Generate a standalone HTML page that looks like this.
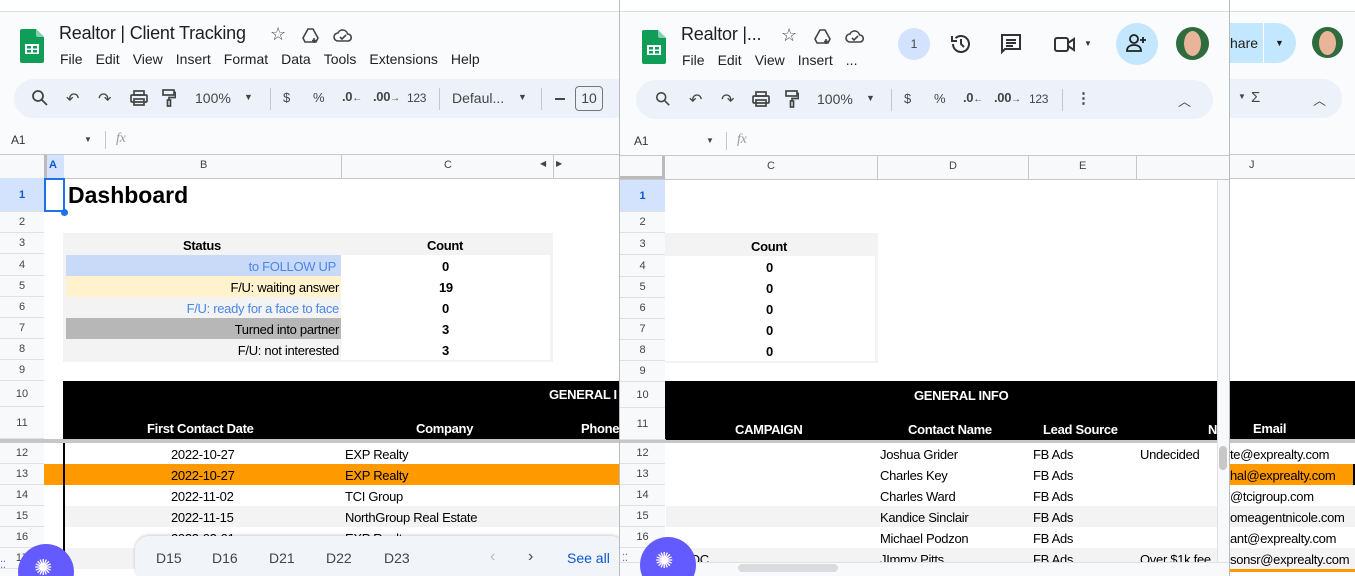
<!DOCTYPE html>
<html style="width:1355px;height:576px;overflow:hidden"><head><meta charset="utf-8">
<style>
*{margin:0;padding:0;box-sizing:border-box}
body{width:1355px;height:576px;overflow:hidden;position:relative;background:#fff;font-family:"Liberation Sans",Arial,sans-serif;color:#202124}
.a{position:absolute}
.t{position:absolute;white-space:nowrap;font-size:13px;letter-spacing:-0.3px}
.rh{position:absolute;left:0;width:44px;text-align:center;font-size:11px;color:#444;border-bottom:1px solid #e1e1e1;background:#f8f9fa}
.rh2{position:absolute;left:620px;width:45px;text-align:center;font-size:11px;color:#444;border-bottom:1px solid #e1e1e1;background:#f8f9fa}
.menu span{margin-right:13px}
.ic{position:absolute;font-size:15px;color:#444}
</style></head><body>

<!-- ===== LEFT WINDOW ===== -->
<div class="a" style="left:0;top:0;width:620px;height:155px;background:#f9fbfd"></div>
<div class="a" style="left:0;top:0;width:1355px;height:12px;background:#fff;border-bottom:1px solid #dadce0"></div>
<svg class="a" style="left:20px;top:29px" width="24" height="34" viewBox="0 0 24 34"><path d="M2 0h14l8 8v24a2 2 0 0 1-2 2H2a2 2 0 0 1-2-2V2a2 2 0 0 1 2-2z" fill="#0f9d58"/><path d="M16 0l8 8h-6a2 2 0 0 1-2-2z" fill="#87ceac"/><rect x="5" y="15" width="14" height="10" fill="#fff"/><rect x="7" y="17" width="4" height="2.5" fill="#0f9d58"/><rect x="13" y="17" width="4" height="2.5" fill="#0f9d58"/><rect x="7" y="21" width="4" height="2.5" fill="#0f9d58"/><rect x="13" y="21" width="4" height="2.5" fill="#0f9d58"/></svg>
<div class="t" style="left:59px;top:23px;font-size:18px;color:#1f1f1f;letter-spacing:-0.2px">Realtor | Client Tracking</div>
<div class="ic" style="left:270px;top:24px;font-size:18px">☆</div>
<svg class="a" style="left:302px;top:27px" width="18" height="17" viewBox="0 0 18 17" fill="none" stroke="#444" stroke-width="1.6"><path d="M6 2h5l5 9-2 4H3l-2-4z"/><path d="M12 11v5M10 13.5h5"/></svg>
<svg class="a" style="left:333px;top:28px" width="20" height="15" viewBox="0 0 20 15" fill="none" stroke="#444" stroke-width="1.6"><path d="M5 13a4 4 0 0 1 0-8 5 5 0 0 1 9.5 1A3.5 3.5 0 0 1 15 13z"/><path d="M7 9l2 2 4-4"/></svg>
<div class="t menu" style="left:60px;top:51px;font-size:14px;color:#1f1f1f;letter-spacing:0"><span>File</span><span>Edit</span><span>View</span><span>Insert</span><span>Format</span><span>Data</span><span>Tools</span><span>Extensions</span><span>Help</span></div>
<div class="a" style="left:14px;top:79px;width:620px;height:39px;background:#edf2fa;border-radius:20px"></div>
<svg class="a" style="left:31px;top:89px" width="18" height="18" viewBox="0 0 18 18" fill="none" stroke="#444" stroke-width="1.8"><circle cx="7" cy="7" r="5"/><path d="M11 11l5 5"/></svg>
<div class="t" style="left:66px;top:89px;font-size:16px;color:#444">↶</div>
<div class="t" style="left:98px;top:89px;font-size:16px;color:#444">↷</div>
<svg class="a" style="left:130px;top:90px" width="18" height="16" viewBox="0 0 18 16" fill="none" stroke="#444" stroke-width="1.7"><rect x="4" y="1" width="10" height="4"/><rect x="1" y="5" width="16" height="7" rx="1"/><rect x="4" y="9" width="10" height="6"/></svg>
<svg class="a" style="left:162px;top:89px" width="14" height="18" viewBox="0 0 14 18" fill="none" stroke="#444" stroke-width="1.7"><rect x="1" y="1" width="11" height="5"/><path d="M12 3.5h1.5v5H7v3"/><rect x="5.5" y="11" width="3" height="6"/></svg>
<div class="t" style="left:195px;top:90px;font-size:14px;color:#444;letter-spacing:0">100%</div>
<div class="t" style="left:244px;top:92px;font-size:9px;color:#444">▼</div>
<div class="a" style="left:270px;top:88px;width:1px;height:22px;background:#c7c7c7"></div>
<div class="t" style="left:283px;top:90px;font-size:13px;color:#444">$</div>
<div class="t" style="left:313px;top:90px;font-size:13px;color:#444">%</div>
<div class="t" style="left:342px;top:89px;font-size:13px;color:#444;font-weight:bold">.0<span style="font-size:10px">←</span></div>
<div class="t" style="left:373px;top:89px;font-size:13px;color:#444;font-weight:bold">.00<span style="font-size:10px">→</span></div>
<div class="t" style="left:407px;top:91px;font-size:12px;color:#444">123</div>
<div class="a" style="left:439px;top:88px;width:1px;height:22px;background:#c7c7c7"></div>
<div class="t" style="left:452px;top:90px;font-size:14px;color:#444;letter-spacing:0">Defaul...</div>
<div class="t" style="left:518px;top:92px;font-size:9px;color:#444">▼</div>
<div class="a" style="left:541px;top:88px;width:1px;height:22px;background:#c7c7c7"></div>
<div class="a" style="left:555px;top:98px;width:10px;height:1.5px;background:#444"></div>
<div class="a" style="left:575px;top:86px;width:28px;height:25px;border:1px solid #747775;border-radius:4px;font-size:14px;text-align:center;line-height:23px;color:#444">10</div>
<div class="t" style="left:11px;top:133px;font-size:12px;color:#333">A1</div>
<div class="t" style="left:84px;top:135px;font-size:8px;color:#444">▼</div>
<div class="a" style="left:105px;top:131px;width:1px;height:18px;background:#c7c7c7"></div>
<div class="t" style="left:116px;top:131px;font-size:14px;color:#999;font-style:italic;font-family:'Liberation Serif',serif">fx</div>
<div class="a" style="left:0;top:154px;width:620px;height:25px;background:#f8f9fa;border-top:1px solid #c7c7c7;border-bottom:1px solid #c7c7c7"></div>
<div class="a" style="left:44px;top:155px;width:20px;height:23px;background:#d3e3fd;border-left:3px solid #bbb"></div>
<div class="t" style="left:49px;top:159px;font-size:11px;font-weight:bold;color:#0b57d0">A</div>
<div class="a" style="left:341px;top:155px;width:1px;height:23px;background:#c7c7c7"></div>
<div class="a" style="left:553px;top:155px;width:1px;height:23px;background:#c7c7c7"></div>
<div class="t" style="left:200px;top:159px;font-size:11px;color:#444">B</div>
<div class="t" style="left:444px;top:159px;font-size:11px;color:#444">C</div>
<div class="t" style="left:540px;top:159px;font-size:8px;color:#444">◀</div>
<div class="t" style="left:556px;top:159px;font-size:8px;color:#444">▶</div>
<div class="a" style="left:0;top:178px;width:44px;height:398px;background:#f8f9fa;border-right:1px solid #c7c7c7"></div>
<div class="rh" style="top:178px;height:34px;line-height:34px;background:#d3e3fd;color:#0b57d0;font-weight:bold">1</div>
<div class="rh" style="top:212px;height:21px;line-height:21px">2</div>
<div class="rh" style="top:233px;height:21px;line-height:21px">3</div>
<div class="rh" style="top:254px;height:22px;line-height:22px">4</div>
<div class="rh" style="top:276px;height:21px;line-height:21px">5</div>
<div class="rh" style="top:297px;height:21px;line-height:21px">6</div>
<div class="rh" style="top:318px;height:21px;line-height:21px">7</div>
<div class="rh" style="top:339px;height:21px;line-height:21px">8</div>
<div class="rh" style="top:360px;height:21px;line-height:21px">9</div>
<div class="rh" style="top:381px;height:26px;line-height:26px">10</div>
<div class="rh" style="top:407px;height:32px;line-height:32px">11</div>
<div class="rh" style="top:443px;height:21px;line-height:21px">12</div>
<div class="rh" style="top:464px;height:21px;line-height:21px">13</div>
<div class="rh" style="top:485px;height:21px;line-height:21px">14</div>
<div class="rh" style="top:506px;height:21px;line-height:21px">15</div>
<div class="rh" style="top:527px;height:21px;line-height:21px">16</div>
<div class="rh" style="top:548px;height:21px;line-height:21px">17</div>

<div class="a" style="left:44px;top:178px;width:21px;height:34px;border:2px solid #1a73e8"></div>
<div class="a" style="left:61px;top:209px;width:7px;height:7px;border-radius:50%;background:#1a73e8"></div>
<div class="t" style="left:68px;top:182px;font-size:23px;font-weight:bold;color:#000;letter-spacing:0">Dashboard</div>

<div class="a" style="left:63px;top:233px;width:490px;height:129px;background:#f3f3f3"></div>
<div class="a" style="left:341px;top:255px;width:209px;height:105px;background:#fff"></div>
<div class="t" style="left:183px;top:238px;font-weight:bold;color:#000">Status</div>
<div class="t" style="left:427px;top:238px;font-weight:bold;color:#000">Count</div>
<div class="a" style="left:66px;top:255px;width:275px;height:21px;background:#c9daf8"></div>
<div class="t" style="right:1019px;top:259px;color:#4a86e8">to FOLLOW UP</div>
<div class="a" style="left:66px;top:276px;width:275px;height:21px;background:#fff2cc"></div>
<div class="t" style="right:1016px;top:280px;color:#000">F/U: waiting answer</div>
<div class="t" style="right:1016px;top:301px;color:#4a86e8">F/U: ready for a face to face</div>
<div class="a" style="left:66px;top:318px;width:275px;height:21px;background:#b7b7b7"></div>
<div class="t" style="right:1016px;top:322px;color:#000">Turned into partner</div>
<div class="t" style="right:1016px;top:343px;color:#000">F/U: not interested</div>
<div class="t" style="left:442px;top:259px;font-weight:bold;color:#000">0</div>
<div class="t" style="left:439px;top:280px;font-weight:bold;color:#000">19</div>
<div class="t" style="left:442px;top:301px;font-weight:bold;color:#000">0</div>
<div class="t" style="left:442px;top:322px;font-weight:bold;color:#000">3</div>
<div class="t" style="left:442px;top:343px;font-weight:bold;color:#000">3</div>

<div class="a" style="left:63px;top:381px;width:1292px;height:58px;background:#000"></div>
<div class="t" style="left:549px;top:387px;font-weight:bold;color:#fff">GENERAL I</div>
<div class="t" style="left:147px;top:421px;font-weight:bold;color:#fff">First Contact Date</div>
<div class="t" style="left:416px;top:421px;font-weight:bold;color:#fff">Company</div>
<div class="t" style="left:581px;top:421px;font-weight:bold;color:#fff">Phone</div>
<div class="a" style="left:0;top:439px;width:1355px;height:4px;background:#c7c7c7"></div>
<div class="a" style="left:44px;top:464px;width:576px;height:21px;background:#ff9900"></div>
<div class="a" style="left:64px;top:506px;width:556px;height:21px;background:#f3f3f3"></div>
<div class="a" style="left:64px;top:548px;width:556px;height:21px;background:#f3f3f3"></div>
<div class="a" style="left:63px;top:443px;width:2px;height:133px;background:#000"></div>
<div class="t" style="left:171px;top:447px;color:#000">2022-10-27</div>
<div class="t" style="left:345px;top:447px;color:#000">EXP Realty</div>
<div class="t" style="left:171px;top:468px;color:#000">2022-10-27</div>
<div class="t" style="left:345px;top:468px;color:#000">EXP Realty</div>
<div class="t" style="left:171px;top:489px;color:#000">2022-11-02</div>
<div class="t" style="left:345px;top:489px;color:#000">TCI Group</div>
<div class="t" style="left:171px;top:510px;color:#000">2022-11-15</div>
<div class="t" style="left:345px;top:510px;color:#000">NorthGroup Real Estate</div>
<div class="t" style="left:171px;top:531px;color:#000">2023-02-01</div>
<div class="t" style="left:345px;top:531px;color:#000">EXP Realty</div>
<div class="a" style="left:160px;top:566px;width:460px;height:3px;background:#ff9900"></div>
<div class="a" style="left:135px;top:536px;width:490px;height:45px;background:#f1f4f9;border-radius:14px;box-shadow:0 -1px 3px rgba(0,0,0,.2)"></div>
<div class="t" style="left:156px;top:550px;font-size:14px;color:#444;letter-spacing:0">D15</div>
<div class="t" style="left:212px;top:550px;font-size:14px;color:#444;letter-spacing:0">D16</div>
<div class="t" style="left:269px;top:550px;font-size:14px;color:#444;letter-spacing:0">D21</div>
<div class="t" style="left:326px;top:550px;font-size:14px;color:#444;letter-spacing:0">D22</div>
<div class="t" style="left:384px;top:550px;font-size:14px;color:#444;letter-spacing:0">D23</div>
<div class="t" style="left:490px;top:548px;font-size:16px;color:#bbb">‹</div>
<div class="t" style="left:528px;top:548px;font-size:16px;color:#444">›</div>
<div class="t" style="left:567px;top:550px;font-size:14px;color:#0b57d0;letter-spacing:0">See all</div>
<div class="a" style="left:18px;top:544px;width:56px;height:56px;border-radius:50%;background:#635bff"></div>
<div class="t" style="left:34px;top:555px;font-size:22px;color:#fff">✺</div>
<div class="t" style="left:0;top:563px;font-size:10px;color:#635bff;line-height:6px">⁚⁚</div>

<!-- ===== RIGHT BACKGROUND ===== -->
<div class="a" style="left:1229px;top:13px;width:126px;height:142px;background:#f9fbfd"></div>
<div class="a" style="left:1200px;top:23px;width:96px;height:40px;background:#c2e7ff;border-radius:20px"></div>
<div class="a" style="left:1263px;top:23px;width:1px;height:40px;background:#fff"></div>
<div class="t" style="left:1230px;top:35px;font-size:14px;color:#1f1f1f;letter-spacing:0">hare</div>
<div class="t" style="left:1275px;top:38px;font-size:9px;color:#1f1f1f">▼</div>
<div class="a" style="left:1312px;top:27px;width:31px;height:31px;border-radius:50%;background:#2e6b3d"></div>
<div class="a" style="left:1319px;top:31px;width:17px;height:24px;border-radius:50%;background:#e8b59a"></div>
<div class="a" style="left:1200px;top:79px;width:142px;height:39px;background:#edf2fa;border-radius:20px"></div>
<div class="t" style="left:1238px;top:92px;font-size:8px;color:#444">▼</div>
<div class="t" style="left:1251px;top:89px;font-size:15px;color:#444">Σ</div>
<div class="t" style="left:1313px;top:90px;font-size:13px;color:#444">︿</div>
<div class="a" style="left:1229px;top:154px;width:126px;height:25px;background:#f8f9fa;border-top:1px solid #c7c7c7;border-bottom:1px solid #c7c7c7"></div>
<div class="t" style="left:1249px;top:159px;font-size:11px;color:#444">J</div>
<div class="a" style="left:1229px;top:464px;width:126px;height:21px;background:#ff9900;border-right:2px solid #000"></div>
<div class="a" style="left:1229px;top:506px;width:126px;height:21px;background:#f3f3f3"></div>
<div class="a" style="left:1229px;top:548px;width:126px;height:21px;background:#f3f3f3"></div>
<div class="t" style="left:1253px;top:421px;font-weight:bold;color:#fff">Email</div>
<div class="t" style="left:1230px;top:447px;color:#000">te@exprealty.com</div>
<div class="t" style="left:1230px;top:468px;color:#000">hal@exprealty.com</div>
<div class="t" style="left:1230px;top:489px;color:#000">@tcigroup.com</div>
<div class="t" style="left:1230px;top:510px;color:#000">omeagentnicole.com</div>
<div class="t" style="left:1230px;top:531px;color:#000">ant@exprealty.com</div>
<div class="t" style="left:1230px;top:552px;color:#000">sonsr@exprealty.com</div>
<div class="a" style="left:1229px;top:569px;width:126px;height:3px;background:#ff9900"></div>

<!-- ===== RIGHT WINDOW ===== -->
<div class="a" style="left:619px;top:0;width:1px;height:576px;background:#bbb"></div>
<div class="a" style="left:1229px;top:0;width:1px;height:576px;background:#bbb"></div>
<div class="a" style="left:620px;top:13px;width:609px;height:142px;background:#f9fbfd"></div>
<svg class="a" style="left:642px;top:30px" width="24" height="34" viewBox="0 0 24 34"><path d="M2 0h14l8 8v24a2 2 0 0 1-2 2H2a2 2 0 0 1-2-2V2a2 2 0 0 1 2-2z" fill="#0f9d58"/><path d="M16 0l8 8h-6a2 2 0 0 1-2-2z" fill="#87ceac"/><rect x="5" y="15" width="14" height="10" fill="#fff"/><rect x="7" y="17" width="4" height="2.5" fill="#0f9d58"/><rect x="13" y="17" width="4" height="2.5" fill="#0f9d58"/><rect x="7" y="21" width="4" height="2.5" fill="#0f9d58"/><rect x="13" y="21" width="4" height="2.5" fill="#0f9d58"/></svg>
<div class="t" style="left:681px;top:24px;font-size:18px;color:#1f1f1f;letter-spacing:-0.2px">Realtor |...</div>
<div class="ic" style="left:781px;top:25px;font-size:18px">☆</div>
<svg class="a" style="left:814px;top:28px" width="18" height="17" viewBox="0 0 18 17" fill="none" stroke="#444" stroke-width="1.6"><path d="M6 2h5l5 9-2 4H3l-2-4z"/><path d="M12 11v5M10 13.5h5"/></svg>
<svg class="a" style="left:845px;top:29px" width="20" height="15" viewBox="0 0 20 15" fill="none" stroke="#444" stroke-width="1.6"><path d="M5 13a4 4 0 0 1 0-8 5 5 0 0 1 9.5 1A3.5 3.5 0 0 1 15 13z"/><path d="M7 9l2 2 4-4"/></svg>
<div class="t menu" style="left:682px;top:52px;font-size:14px;color:#1f1f1f;letter-spacing:0"><span>File</span><span>Edit</span><span>View</span><span>Insert</span><span>...</span></div>
<div class="a" style="left:898px;top:28px;width:32px;height:32px;border-radius:50%;background:#d3e3fd;text-align:center;line-height:32px;font-size:12px;color:#444">1</div>
<svg class="a" style="left:949px;top:32px" width="24" height="24" viewBox="0 0 24 24" fill="none" stroke="#333" stroke-width="2"><path d="M4 12a8 8 0 1 0 2.5-5.8"/><path d="M3 4v5h5"/><path d="M12 7v5l3 3"/></svg>
<svg class="a" style="left:1000px;top:33px" width="22" height="22" viewBox="0 0 22 22" fill="none" stroke="#333" stroke-width="2"><path d="M2 2h18v14H5l-3 3z"/><path d="M6 7h10M6 10h10M6 13h7"/></svg>
<svg class="a" style="left:1054px;top:36px" width="22" height="17" viewBox="0 0 22 17" fill="none" stroke="#333" stroke-width="2"><rect x="1" y="2" width="13" height="13" rx="2"/><path d="M14 7l6-4v11l-6-4"/></svg>
<div class="t" style="left:1084px;top:39px;font-size:8px;color:#333">▼</div>
<div class="a" style="left:1116px;top:23px;width:42px;height:42px;border-radius:50%;background:#c2e7ff"></div>
<svg class="a" style="left:1126px;top:33px" width="22" height="20" viewBox="0 0 22 20" fill="none" stroke="#1f1f1f" stroke-width="1.8"><circle cx="8" cy="6" r="4"/><path d="M1 18c0-4 3-6 7-6s7 2 7 6z"/><path d="M17 4v6M14 7h6"/></svg>
<div class="a" style="left:1176px;top:27px;width:33px;height:33px;border-radius:50%;background:#2e6b3d"></div>
<div class="a" style="left:1184px;top:31px;width:17px;height:25px;border-radius:50%;background:#e8b59a"></div>
<div class="a" style="left:636px;top:80px;width:577px;height:39px;background:#edf2fa;border-radius:20px"></div>
<svg class="a" style="left:655px;top:91px" width="16" height="16" viewBox="0 0 18 18" fill="none" stroke="#444" stroke-width="1.8"><circle cx="7" cy="7" r="5"/><path d="M11 11l5 5"/></svg>
<div class="t" style="left:689px;top:90px;font-size:16px;color:#444">↶</div>
<div class="t" style="left:721px;top:90px;font-size:16px;color:#444">↷</div>
<svg class="a" style="left:752px;top:91px" width="18" height="16" viewBox="0 0 18 16" fill="none" stroke="#444" stroke-width="1.7"><rect x="4" y="1" width="10" height="4"/><rect x="1" y="5" width="16" height="7" rx="1"/><rect x="4" y="9" width="10" height="6"/></svg>
<svg class="a" style="left:785px;top:90px" width="14" height="18" viewBox="0 0 14 18" fill="none" stroke="#444" stroke-width="1.7"><rect x="1" y="1" width="11" height="5"/><path d="M12 3.5h1.5v5H7v3"/><rect x="5.5" y="11" width="3" height="6"/></svg>
<div class="t" style="left:817px;top:91px;font-size:14px;color:#444;letter-spacing:0">100%</div>
<div class="t" style="left:866px;top:93px;font-size:9px;color:#444">▼</div>
<div class="a" style="left:891px;top:89px;width:1px;height:22px;background:#c7c7c7"></div>
<div class="t" style="left:904px;top:91px;font-size:13px;color:#444">$</div>
<div class="t" style="left:934px;top:91px;font-size:13px;color:#444">%</div>
<div class="t" style="left:963px;top:90px;font-size:13px;color:#444;font-weight:bold">.0<span style="font-size:10px">←</span></div>
<div class="t" style="left:994px;top:90px;font-size:13px;color:#444;font-weight:bold">.00<span style="font-size:10px">→</span></div>
<div class="t" style="left:1029px;top:92px;font-size:12px;color:#444">123</div>
<div class="a" style="left:1062px;top:89px;width:1px;height:22px;background:#c7c7c7"></div>
<div class="t" style="left:1076px;top:89px;font-size:15px;color:#444;font-weight:bold">⋮</div>
<div class="t" style="left:1178px;top:91px;font-size:13px;color:#444">︿</div>
<div class="t" style="left:634px;top:134px;font-size:12px;color:#333">A1</div>
<div class="t" style="left:706px;top:136px;font-size:8px;color:#444">▼</div>
<div class="a" style="left:726px;top:132px;width:1px;height:18px;background:#c7c7c7"></div>
<div class="t" style="left:737px;top:132px;font-size:14px;color:#999;font-style:italic;font-family:'Liberation Serif',serif">fx</div>
<div class="a" style="left:620px;top:155px;width:609px;height:25px;background:#f8f9fa;border-top:1px solid #c7c7c7;border-bottom:1px solid #c7c7c7"></div>
<div class="a" style="left:620px;top:156px;width:45px;height:23px;border-right:3px solid #bbb;border-bottom:3px solid #bbb"></div>
<div class="a" style="left:877px;top:156px;width:1px;height:23px;background:#c7c7c7"></div>
<div class="a" style="left:1028px;top:156px;width:1px;height:23px;background:#c7c7c7"></div>
<div class="a" style="left:1136px;top:156px;width:1px;height:23px;background:#c7c7c7"></div>
<div class="t" style="left:767px;top:160px;font-size:11px;color:#444">C</div>
<div class="t" style="left:949px;top:160px;font-size:11px;color:#444">D</div>
<div class="t" style="left:1079px;top:160px;font-size:11px;color:#444">E</div>
<div class="a" style="left:665px;top:180px;width:552px;height:201px;background:#fff"></div>
<div class="a" style="left:620px;top:180px;width:45px;height:396px;background:#f8f9fa;border-right:1px solid #c7c7c7"></div>
<div class="rh2" style="top:180px;height:32px;line-height:32px;background:#d3e3fd;color:#0b57d0;font-weight:bold">1</div>
<div class="rh2" style="top:212px;height:21px;line-height:21px">2</div>
<div class="rh2" style="top:233px;height:22px;line-height:22px">3</div>
<div class="rh2" style="top:255px;height:22px;line-height:22px">4</div>
<div class="rh2" style="top:277px;height:21px;line-height:21px">5</div>
<div class="rh2" style="top:298px;height:21px;line-height:21px">6</div>
<div class="rh2" style="top:319px;height:21px;line-height:21px">7</div>
<div class="rh2" style="top:340px;height:21px;line-height:21px">8</div>
<div class="rh2" style="top:361px;height:21px;line-height:21px">9</div>
<div class="rh2" style="top:382px;height:26px;line-height:26px">10</div>
<div class="rh2" style="top:408px;height:32px;line-height:32px">11</div>
<div class="rh2" style="top:443px;height:21px;line-height:21px">12</div>
<div class="rh2" style="top:464px;height:21px;line-height:21px">13</div>
<div class="rh2" style="top:485px;height:21px;line-height:21px">14</div>
<div class="rh2" style="top:506px;height:21px;line-height:21px">15</div>
<div class="rh2" style="top:527px;height:21px;line-height:21px">16</div>
<div class="a" style="left:665px;top:233px;width:213px;height:130px;background:#f3f3f3"></div>
<div class="a" style="left:665px;top:256px;width:210px;height:105px;background:#fff"></div>
<div class="t" style="left:751px;top:239px;font-weight:bold;color:#000">Count</div>
<div class="t" style="left:766px;top:260px;font-weight:bold;color:#000">0</div>
<div class="t" style="left:766px;top:281px;font-weight:bold;color:#000">0</div>
<div class="t" style="left:766px;top:302px;font-weight:bold;color:#000">0</div>
<div class="t" style="left:766px;top:323px;font-weight:bold;color:#000">0</div>
<div class="t" style="left:766px;top:344px;font-weight:bold;color:#000">0</div>
<div class="a" style="left:666px;top:382px;width:551px;height:58px;background:#000"></div>
<div class="t" style="left:914px;top:388px;font-weight:bold;color:#fff">GENERAL INFO</div>
<div class="t" style="left:735px;top:422px;font-weight:bold;color:#fff">CAMPAIGN</div>
<div class="t" style="left:908px;top:422px;font-weight:bold;color:#fff">Contact Name</div>
<div class="t" style="left:1043px;top:422px;font-weight:bold;color:#fff">Lead Source</div>
<div class="t" style="left:1208px;top:422px;font-weight:bold;color:#fff">N</div>
<div class="a" style="left:620px;top:440px;width:609px;height:3px;background:#c7c7c7"></div>
<div class="a" style="left:666px;top:443px;width:551px;height:133px;background:#fff"></div>
<div class="a" style="left:666px;top:506px;width:551px;height:21px;background:#f3f3f3"></div>
<div class="a" style="left:666px;top:548px;width:551px;height:21px;background:#f3f3f3"></div>
<div class="t" style="left:880px;top:447px;color:#000">Joshua Grider</div>
<div class="t" style="left:1033px;top:447px;color:#000">FB Ads</div>
<div class="t" style="left:1140px;top:447px;color:#000">Undecided</div>
<div class="t" style="left:880px;top:468px;color:#000">Charles Key</div>
<div class="t" style="left:1033px;top:468px;color:#000">FB Ads</div>
<div class="t" style="left:880px;top:489px;color:#000">Charles Ward</div>
<div class="t" style="left:1033px;top:489px;color:#000">FB Ads</div>
<div class="t" style="left:880px;top:510px;color:#000">Kandice Sinclair</div>
<div class="t" style="left:1033px;top:510px;color:#000">FB Ads</div>
<div class="t" style="left:880px;top:531px;color:#000">Michael Podzon</div>
<div class="t" style="left:1033px;top:531px;color:#000">FB Ads</div>
<div class="t" style="left:690px;top:552px;color:#000">OC</div>
<div class="t" style="left:880px;top:552px;color:#000">JImmy Pitts</div>
<div class="t" style="left:1033px;top:552px;color:#000">FB Ads</div>
<div class="t" style="left:1140px;top:552px;color:#000">Over $1k fee</div>
<div class="a" style="left:1217px;top:180px;width:12px;height:396px;background:#f8f9fa;border-left:1px solid #e1e1e1"></div>
<div class="a" style="left:1219px;top:446px;width:8px;height:24px;border-radius:4px;background:#c7c7c7"></div>
<div class="a" style="left:620px;top:562px;width:609px;height:14px;background:#f8f9fa;border-top:1px solid #e1e1e1"></div>
<div class="a" style="left:738px;top:564px;width:100px;height:8px;border-radius:4px;background:#dadce0"></div>
<div class="a" style="left:640px;top:537px;width:56px;height:56px;border-radius:50%;background:#635bff"></div>
<div class="t" style="left:655px;top:548px;font-size:22px;color:#fff">✺</div>
<div class="t" style="left:622px;top:556px;font-size:10px;color:#635bff;line-height:6px">⁚⁚</div>
</body></html>
